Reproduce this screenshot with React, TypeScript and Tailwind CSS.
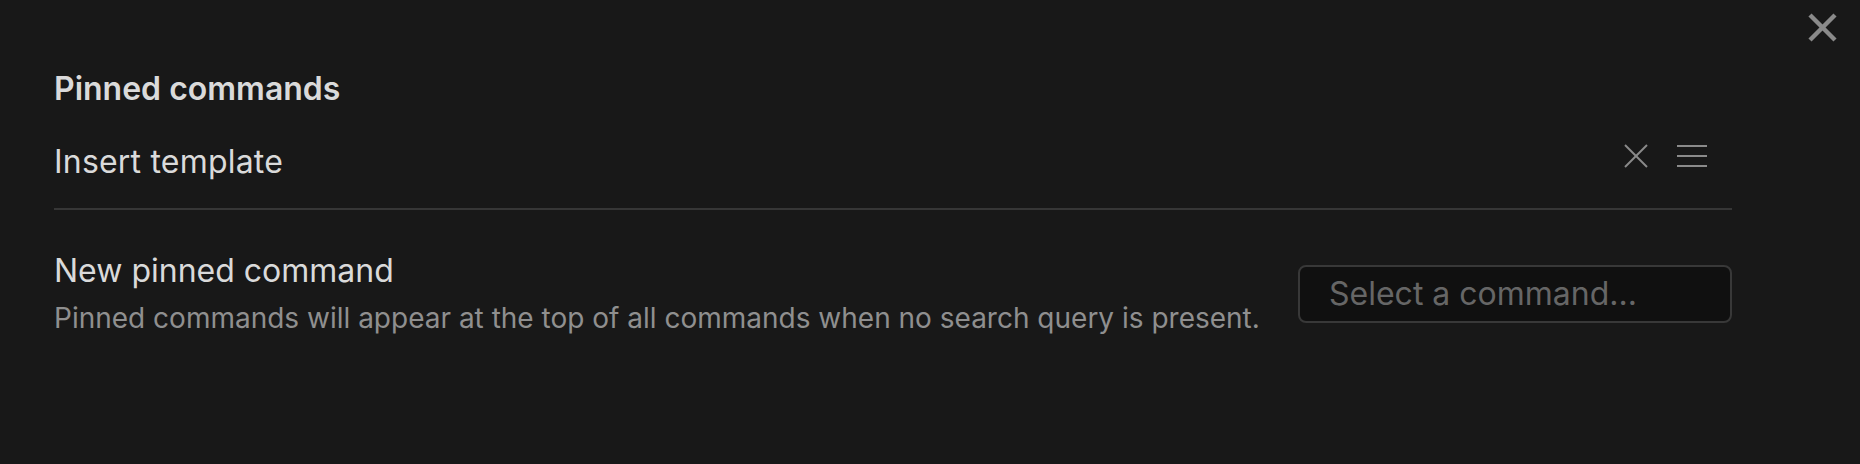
import React from "react";

function XIcon() {
  return (
    <svg width="24" height="24" viewBox="0 0 24 24" fill="none" stroke="#8a8a8a" strokeWidth="2">
      <line x1="1" y1="1" x2="23" y2="23" />
      <line x1="23" y1="1" x2="1" y2="23" />
    </svg>
  );
}

function MenuIcon() {
  return (
    <svg width="30" height="24" viewBox="0 0 30 24" fill="none" stroke="#8a8a8a" strokeWidth="2">
      <line x1="0" y1="2" x2="30" y2="2" />
      <line x1="0" y1="12" x2="30" y2="12" />
      <line x1="0" y1="22" x2="30" y2="22" />
    </svg>
  );
}

export default function App() {
  return (
    <div
      className="relative w-[1860px] h-[464px] bg-[#181818] text-[#dadada] overflow-hidden"
      style={{ fontFamily: "Inter, 'Noto Sans', sans-serif" }}
    >
      <button className="absolute left-[1806px] top-[11px] w-[33px] h-[33px] flex items-center justify-center">
        <svg width="29" height="29" viewBox="0 0 29 29" fill="none" stroke="#8a8a8a" strokeWidth="4.5">
          <line x1="2" y1="2" x2="27" y2="27" />
          <line x1="27" y1="2" x2="2" y2="27" />
        </svg>
      </button>

      <div className="pl-[54px] pr-[128px] pt-[70px]">
        <div className="text-[32px] leading-[38px] font-semibold text-[#dadada]">Pinned commands</div>

        <div className="flex items-start pt-[35px] pb-[27px] border-b-2 border-[#363636]">
          <div className="flex-1 text-[32px] leading-[38px] tracking-[0.2px] text-[#dadada]">Insert template</div>
          <div className="flex items-center gap-[29px] mr-[25px] mt-[1px]">
            <XIcon />
            <MenuIcon />
          </div>
        </div>

        <div className="flex items-center pt-[42px]">
          <div className="flex-1 flex flex-col">
            <div className="text-[32px] leading-[38px] text-[#dadada]">New pinned command</div>
            <div className="mt-[11px] text-[28px] leading-[34px] text-[#8f8f8f]">
              Pinned commands will appear at the top of all commands when no search query is present.
            </div>
          </div>
          <div className="w-[434px] h-[58px] rounded-[8px] border-2 border-[#383838] bg-[#101010] flex items-center pl-[29px] text-[32px] text-[#666666]">
            Select a command...
          </div>
        </div>
      </div>
    </div>
  );
}
